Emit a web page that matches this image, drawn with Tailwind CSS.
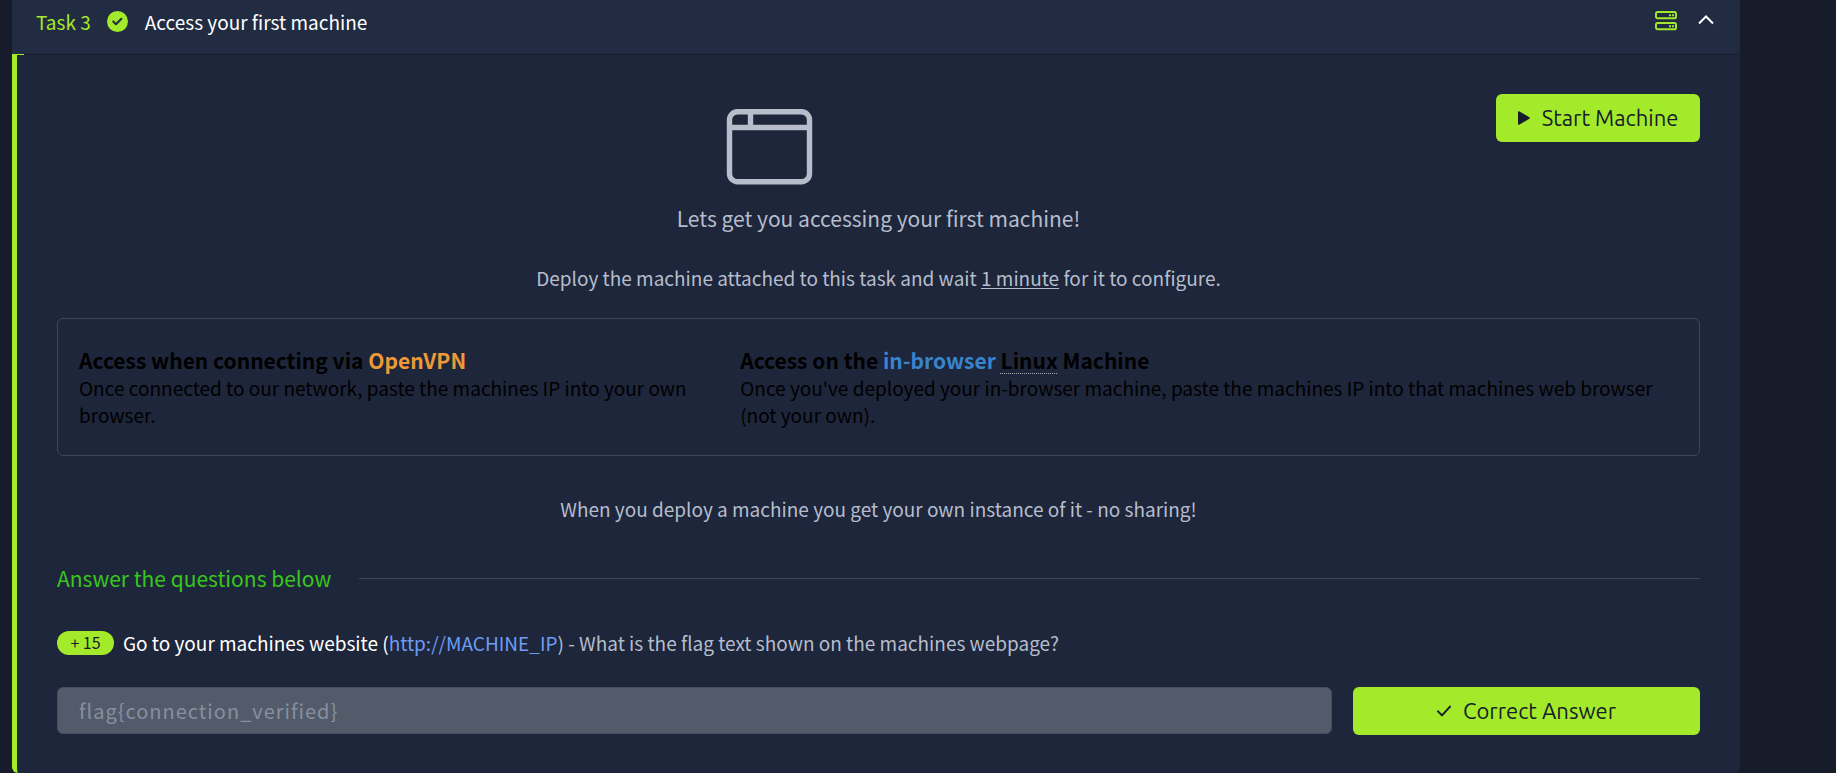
<!DOCTYPE html>
<html lang="en">
<head>
<meta charset="utf-8">
<meta name="viewport" content="width=device-width, initial-scale=1">
<title>Access your first machine</title>
<script src="https://cdn.jsdelivr.net/npm/@tailwindcss/browser@4"></script>
</head>
<body class="min-h-screen bg-[#161c2a] font-['Noto_Sans_CJK_SC',sans-serif] text-[19px] leading-[27px] text-[#b5bdcb]">
<main class="ml-3 mr-24">
  <section class="rounded-b-md bg-[#1e263b]">
    <header class="relative flex h-[54px] items-center rounded-br-md bg-[#212c42] pr-[25px] pb-3 pl-6">
      <span class="text-[#a3ea2a]">Task 3</span>
      <svg class="ml-4 size-[22px]" viewBox="0 0 22 22" aria-hidden="true"><circle cx="10.5" cy="11.5" r="10.5" fill="#a3ea2a"/><path d="M6.3 11.5l2.7 2.7 5.4-5.4" fill="none" stroke="#212c42" stroke-width="2" stroke-linecap="round" stroke-linejoin="round"/></svg>
      <h2 class="ml-4 text-white">Access your first machine</h2>
      <button type="button" aria-label="Machine information" class="ml-auto">
        <svg class="h-5 w-[22px]" viewBox="0 0 22 20" fill="none" stroke="#a3ea2a" stroke-width="1.9" aria-hidden="true"><rect x="1" y="1" width="20" height="6.3" rx="1.6"/><rect x="1" y="12" width="20" height="6.3" rx="1.6"/><path d="M14 4.2h2M17 4.2h2M14 15.2h2M17 15.2h2"/></svg>
      </button>
      <button type="button" aria-label="Collapse task" class="ml-5">
        <svg class="h-5 w-[18px]" viewBox="0 0 18 20" fill="none" stroke="#fff" stroke-width="2" aria-hidden="true"><path d="M2 12.5l7-7 7 7"/></svg>
      </button>
      <span class="absolute -bottom-px left-0 h-px w-3 bg-[#a3ea2a]"></span>
    </header>

    <div class="rounded-bl-md border-t border-l-[5px] border-t-[#161c2a] border-l-[#a3ea2a] px-10 pt-[39px] pb-[38px]">
      <div class="flex items-start gap-[14px]">
        <div class="flex flex-1 justify-center pt-[14px]">
          <svg class="h-[78px] w-[88px]" viewBox="0 0 88 78" fill="none" stroke="#b7bdcb" stroke-width="5.4" aria-hidden="true"><rect x="3.5" y="3.7" width="80" height="70" rx="8"/><path d="M3.5 19.5h80M24.5 4v16"/></svg>
        </div>
        <button type="button" class="flex h-12 w-[204px] items-center justify-center gap-3 rounded-md bg-[#a3ea2a] pb-0.5 font-['Ubuntu','Noto_Sans',sans-serif] text-[22px] text-[#161c2a]">
          <svg class="mt-0.5 h-[14px] w-3" viewBox="0 0 12 14" aria-hidden="true"><path d="M0 1.2Q0-.4 1.5.4L11.3 6.2Q12.4 7 11.3 7.8L1.5 13.6Q0 14.4 0 12.8Z" fill="#161c2a"/></svg>
          Start Machine
        </button>
      </div>

      <h3 class="mt-4 text-center text-[21px] leading-8">Lets get you accessing your first machine!</h3>
      <p class="mt-[30px] text-center">Deploy the machine attached to this task and wait <u class="underline-offset-2">1 minute</u> for it to configure.</p>

      <div class="mt-[27px] grid grid-cols-[2fr_3fr] gap-9 rounded-md border border-[#3e465a] px-[21px] pt-7 pb-[27px] text-black">
        <div>
          <h4 class="text-[21px] font-bold">Access when connecting via <span class="text-[#ed9938]">OpenVPN</span></h4>
          <p>Once connected to our network, paste the machines IP into your own browser.</p>
        </div>
        <div>
          <h4 class="text-[21px] font-bold">Access on the <span class="text-[#3885cd]">in-browser</span> <span class="underline decoration-[#a9adb5] decoration-dotted decoration-1 underline-offset-4">Linux</span> Machine</h4>
          <p>Once you've deployed your in-browser machine, paste the machines IP into that machines web browser (not your own).</p>
        </div>
      </div>

      <p class="mt-[39px] text-center">When you deploy a machine you get your own instance of it - no sharing!</p>

      <div class="mt-10 flex items-center gap-7">
        <h3 class="text-[21px] leading-8 text-[#39c61c]">Answer the questions below</h3>
        <div class="h-px flex-1 bg-[#3e465a]"></div>
      </div>

      <form>
        <div class="mt-[35px] flex items-center gap-[9px]">
          <span class="flex h-6 w-[57px] items-center justify-center rounded-full bg-[#a3ea2a] text-[16px] text-[#161c2a]">+ 15</span>
          <label for="answer"><span class="text-white">Go to your machines website (</span><a href="#" class="text-[#6f9cf4]">http://MACHINE_IP</a>) - What is the flag text shown on the machines webpage?</label>
        </div>
        <div class="mt-[31px] flex gap-[21px]">
          <input id="answer" type="text" disabled value="flag{connection_verified}" class="h-[47px] min-w-0 flex-1 rounded-md border border-[#454d60] bg-[#535a69] px-[21px] text-[20px] tracking-wider text-[#868fa2]">
          <button type="button" class="flex h-12 w-[347px] items-center justify-center gap-3 rounded-md bg-[#a3ea2a] pb-0.5 font-['Ubuntu','Noto_Sans',sans-serif] text-[22px] text-[#161c2a]">
            <svg class="mt-0.5 h-3 w-[14px]" viewBox="0 0 14 12" fill="none" stroke="#161c2a" stroke-width="2" stroke-linecap="round" stroke-linejoin="round" aria-hidden="true"><path d="M1 6.4l4 4L13 1.6"/></svg>
            Correct Answer
          </button>
        </div>
      </form>
    </div>
  </section>
</main>
</body>
</html>
